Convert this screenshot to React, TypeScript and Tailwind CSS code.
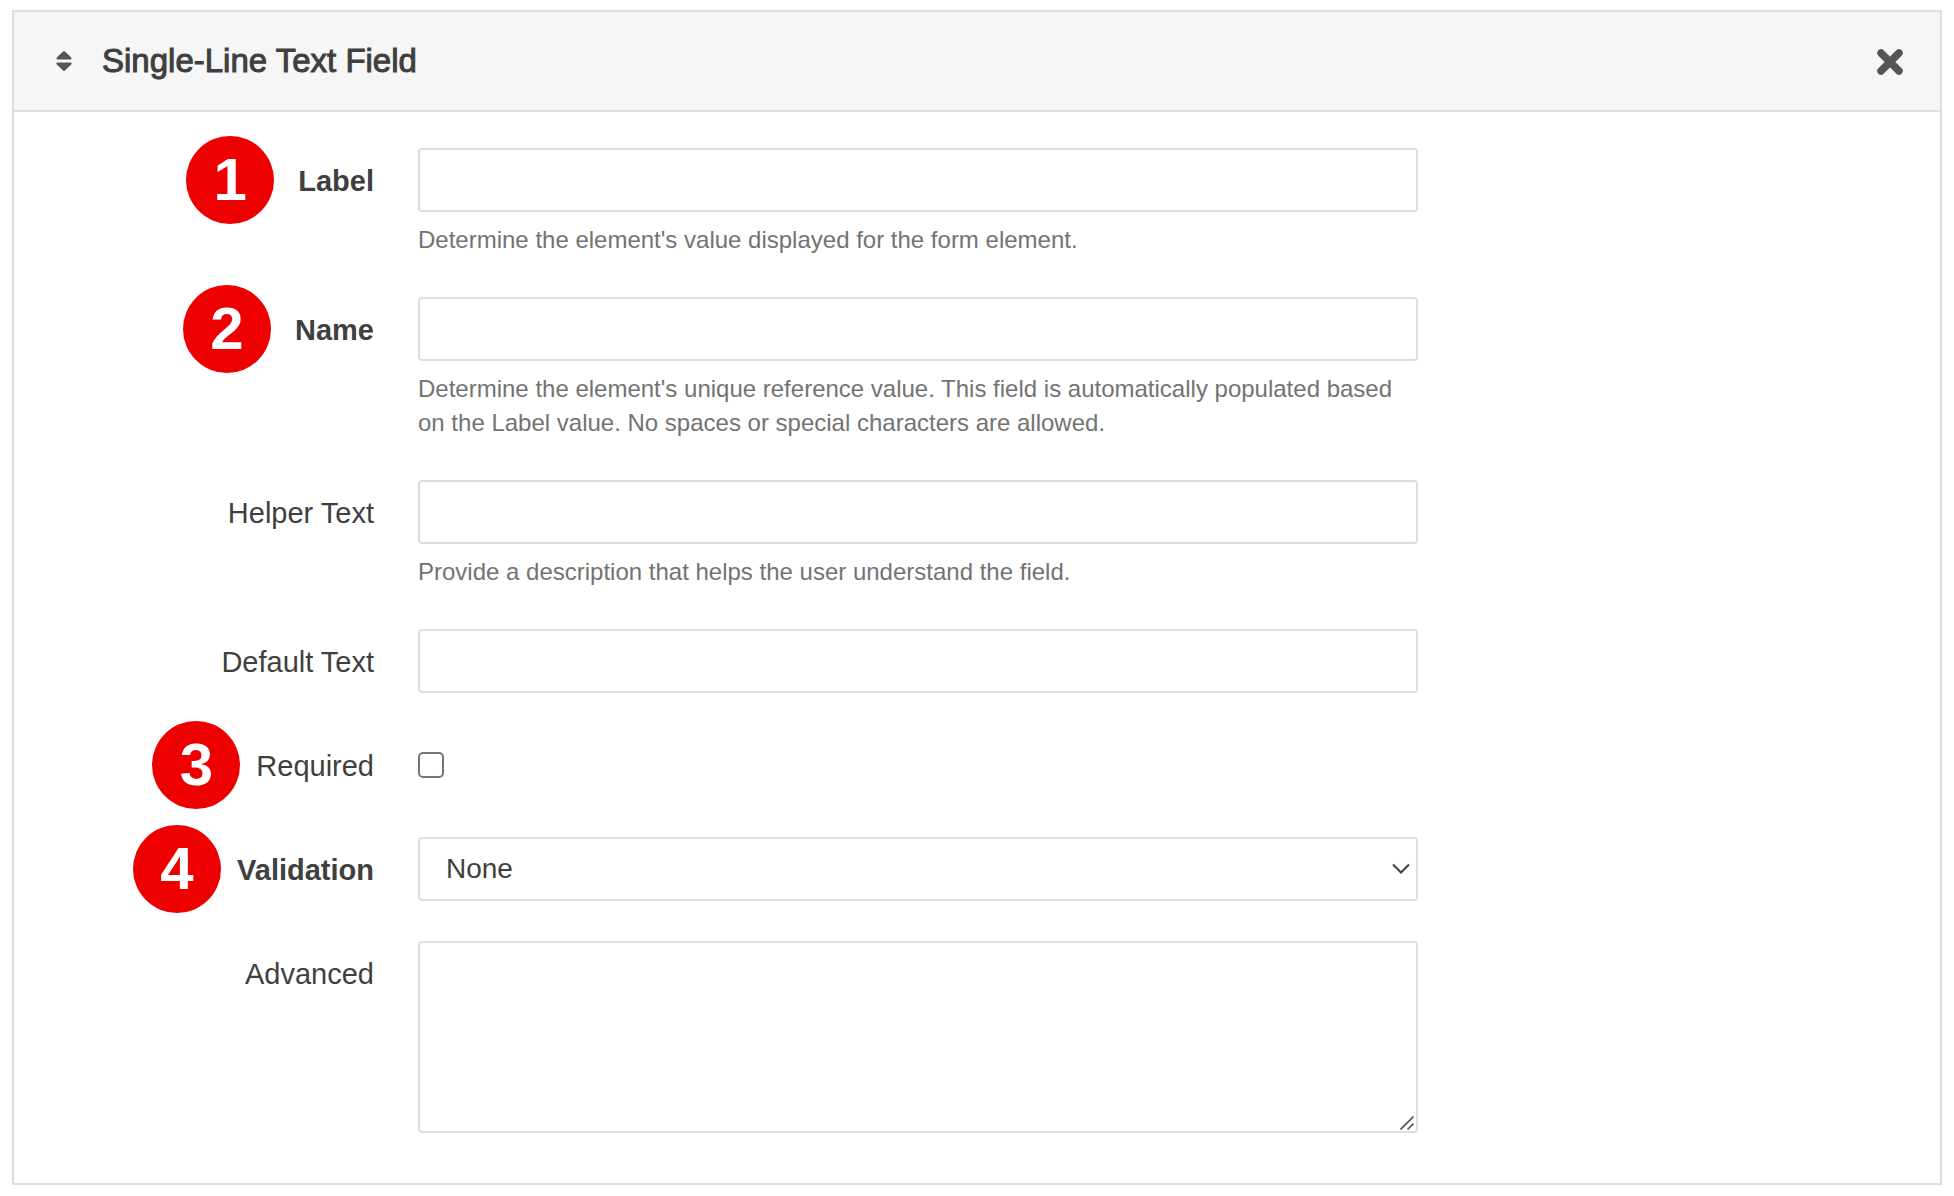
import React, { useState } from 'react';

interface RowProps {
  id: string;
  label: string;
  bold?: boolean;
  badge?: React.ReactNode;
  help?: string;
  children: React.ReactNode;
}

const controlClass =
  'block w-full rounded-[4px] border-2 border-[#dedede] bg-white px-[26px] text-[28px] text-[#3f3f3f] outline-none focus:border-[#a0a0a0]';

function Badge({ value, className }: { value: number; className: string }) {
  return (
    <span
      className={`flex size-[88px] shrink-0 items-center justify-center rounded-full bg-[#ee0000] text-[60px] leading-[60px] font-bold text-white ${className}`}
    >
      {value}
    </span>
  );
}

function Row({ id, label, bold, badge, help, children }: RowProps) {
  return (
    <div className="flex gap-11">
      <div className="flex h-16 w-[360px] shrink-0 items-center justify-end">
        {badge}
        <label
          htmlFor={id}
          className={`pt-[2px] text-[29px] leading-[34px] whitespace-nowrap ${bold ? 'font-bold' : ''}`}
        >
          {label}
        </label>
      </div>
      <div className="w-full max-w-[1000px]">
        {children}
        {help && <p className="pt-[11px] text-[24px] leading-[34px] text-[#737373]">{help}</p>}
      </div>
    </div>
  );
}

export default function App() {
  const [open, setOpen] = useState(true);
  const [required, setRequired] = useState(false);

  if (!open) return null;

  return (
    <main className="px-3 py-[10px] font-['Liberation_Sans',Arial,sans-serif] text-[#3f3f3f]">
      <section className="border-2 border-[#dedede] bg-white">
        {/* Header */}
        <header className="flex h-[100px] items-center border-b-2 border-[#dedede] bg-[#f6f6f6] pr-[37px] pl-[42px]">
          <svg viewBox="0 0 16 20" className="h-5 w-4 fill-[#555555]" aria-hidden="true">
            <path d="M7 .6 Q8 -.2 9 .6 L15.2 6.4 Q16.4 8.4 14.4 8.4 H1.6 Q-.4 8.4 .8 6.4 Z" />
            <path d="M7 19.4 Q8 20.2 9 19.4 L15.2 13.6 Q16.4 11.6 14.4 11.6 H1.6 Q-.4 11.6 .8 13.6 Z" />
          </svg>
          <h2 className="ml-[30px] text-[33px] leading-10 [-webkit-text-stroke:1px_#3f3f3f]">
            Single-Line Text Field
          </h2>
          <button
            type="button"
            aria-label="Close"
            onClick={() => setOpen(false)}
            className="ml-auto cursor-pointer pt-[2px]"
          >
            <svg viewBox="0 0 26 26" className="size-[26px]" aria-hidden="true">
              <path
                d="M4 4 L22 22 M22 4 L4 22"
                fill="none"
                stroke="#555555"
                strokeWidth="7.5"
                strokeLinecap="round"
              />
            </svg>
          </button>
        </header>

        {/* Fields */}
        <form className="flex flex-col gap-10 pt-9 pb-[50px]">
          <Row
            id="label"
            label="Label"
            bold
            badge={<Badge value={1} className="mr-6" />}
            help="Determine the element's value displayed for the form element."
          >
            <input id="label" type="text" className={`${controlClass} h-16`} />
          </Row>
          <Row
            id="name"
            label="Name"
            bold
            badge={<Badge value={2} className="mr-6" />}
            help="Determine the element's unique reference value. This field is automatically populated based on the Label value. No spaces or special characters are allowed."
          >
            <input id="name" type="text" className={`${controlClass} h-16`} />
          </Row>
          <Row
            id="helper"
            label="Helper Text"
            help="Provide a description that helps the user understand the field."
          >
            <input id="helper" type="text" className={`${controlClass} h-16`} />
          </Row>
          <Row id="default" label="Default Text">
            <input id="default" type="text" className={`${controlClass} h-16`} />
          </Row>
          <Row id="required" label="Required" badge={<Badge value={3} className="mr-4" />}>
            <div className="flex h-16 items-center">
              <input
                id="required"
                type="checkbox"
                checked={required}
                onChange={(e) => setRequired(e.target.checked)}
                className="size-[26px] appearance-none rounded-[5px] border-2 border-[#767676] bg-white checked:bg-[#767676]"
              />
            </div>
          </Row>
          <Row
            id="validation"
            label="Validation"
            bold
            badge={<Badge value={4} className="mr-4" />}
          >
            <div className="relative">
              <select id="validation" className={`${controlClass} h-16 appearance-none`}>
                <option>None</option>
              </select>
              <svg
                viewBox="0 0 18 12"
                className="pointer-events-none absolute top-[26px] right-2 h-3 w-[18px]"
                aria-hidden="true"
              >
                <path d="M1 1.5 L9 9.5 L17 1.5" fill="none" stroke="#3f3f3f" strokeWidth="2" />
              </svg>
            </div>
          </Row>
          <Row id="advanced" label="Advanced">
            <div className="relative">
              <textarea
                id="advanced"
                className={`${controlClass} h-48 resize-none py-3`}
              />
              <svg
                viewBox="0 0 14 14"
                className="pointer-events-none absolute right-1 bottom-[3px] size-[14px]"
                aria-hidden="true"
              >
                <path
                  d="M.5 13.5 L13.5 .5 M7.5 13.5 L13.5 7.5"
                  fill="none"
                  stroke="#555555"
                  strokeWidth="1.6"
                />
              </svg>
            </div>
          </Row>
        </form>
      </section>
    </main>
  );
}
